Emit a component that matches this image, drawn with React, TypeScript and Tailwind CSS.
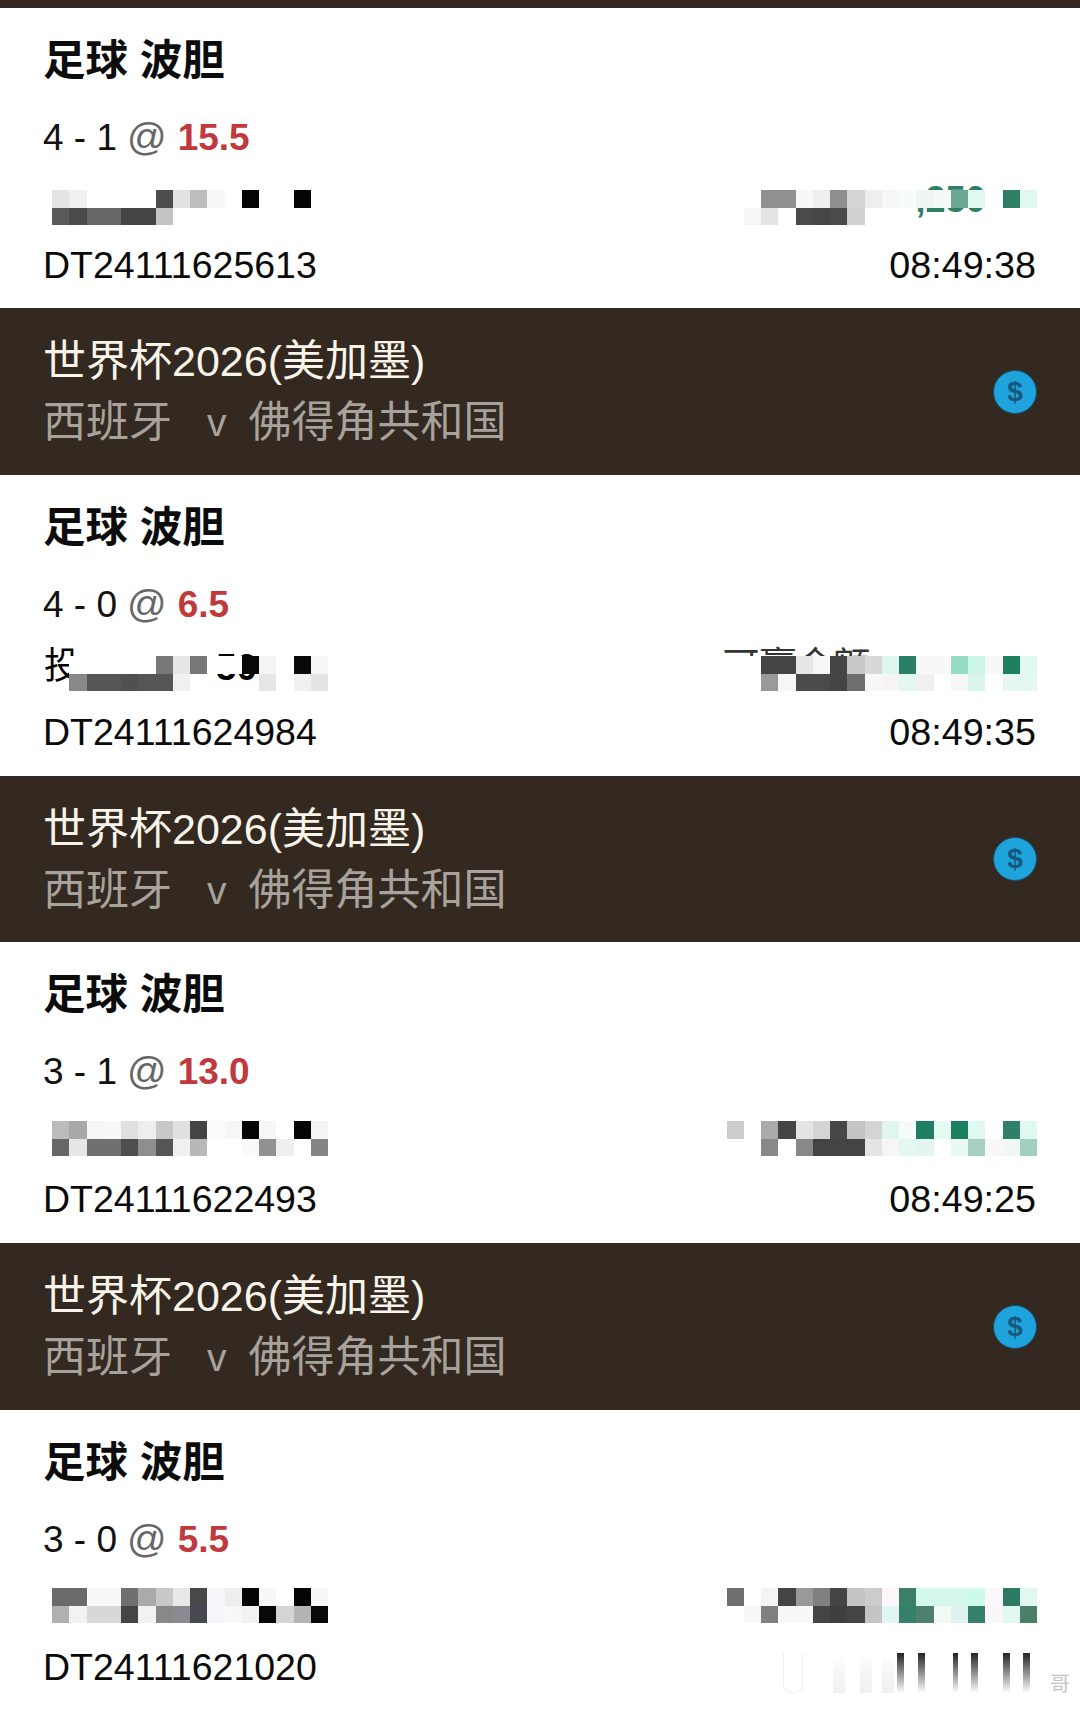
const SANS = "font-['Liberation_Sans','Noto_Sans_CJK_SC',sans-serif]";

// "" = white cell, "t" = see-through cell (text under the mosaic shows)
type MosaicData = { a: string[]; b: string[] };

interface BetData {
  score: string;
  odds: string;
  id: string;
  time?: string;
  height: string;
  mosaicTop: string;
  left: MosaicData;
  right: MosaicData;
  leftUnder?: React.ReactNode;
  rightUnder?: React.ReactNode;
}

const bets: BetData[] = [
  {
    score: '4 - 1',
    odds: '15.5',
    id: 'DT24111625613',
    time: '08:49:38',
    height: 'h-[300px]',
    mosaicTop: 'pt-[4px]',
    left: {
      a: ['#e4e4e4', '#f0f0f0', '', '', '', '', '#4d4d4d', '#e2e2e2', '#bdbdbd', '#f8f8f8', '', '#050505', '', '', '#050505', '', ''],
      b: ['#5a5a5a', '#4a4a4a', '#666666', '#666666', '#444444', '#444444', '#c4c4c4', '', '', '', '', '', '', '', '', '', ''],
    },
    right: {
      a: ['', '', '#909090', '#909090', '#f8f8f8', '#eeeeee', '#8e8e8e', '#d4d4d4', '#eeeeee', '#f6f6f6', '#f7fbf9', '#eef6f2', '#f4f9f7', '#6aa893', '#e0f8f0', '', '#2f7f66', '#e0f8f0'],
      b: ['', '#f6f6f6', '#e4e4e4', '', '#4a4a4a', '#464646', '#4a4a4a', '#d0d0d0', '', '', 't', 't', 't', 't', 't', 't', 't', 't'],
    },
    rightUnder: (
      <span className="absolute left-[189px] top-[-12px] text-[36px] leading-[44px] font-bold whitespace-nowrap text-[#2f7f66]">
        ,250
      </span>
    ),
  },
  {
    score: '4 - 0',
    odds: '6.5',
    id: 'DT24111624984',
    time: '08:49:35',
    height: 'h-[301px]',
    mosaicTop: 'pt-[3px]',
    left: {
      a: ['t', '', '', '', '', '', '#777777', '#e6e6e6', '#777777', '', '', '#080808', '#f4f4f4', '', '#0a0a0a', '#f8f8f8', ''],
      b: ['t', '#888888', '#555555', '#555555', '#505050', '#555555', '#555555', '#f0f0f0', '', 't', 't', 't', '#e6e6e6', '', '#f0f0f0', '#e4e4e4', ''],
    },
    right: {
      a: ['', '', '#444444', '#444444', '#e6e6e6', '#f6f6f6', '#444444', '#c8c8c8', '#d8d8d8', '#dff7ef', '#2a7f66', '#f8f8f8', '#f8f8f8', '#97dcc5', '#cdf5e9', '#f8f8f8', '#1f8060', '#dff8f0'],
      b: ['', '', '#999999', '#f6f6f6', '#4a4a4a', '#4a4a4a', '#444444', '#6f6f6f', '#f8f8f8', '#f8f4f4', '#e4f6f0', '#f0f0f0', '', '#f6f6f6', '#d8f6ec', '', '#e4f8f0', '#e4f8f0'],
    },
    leftUnder: (
      <>
        <span className="absolute left-[-8px] top-[-11px] text-[37px] leading-[44px] text-black">投</span>
        <span className="absolute left-[164px] top-[-10px] text-[37px] leading-[44px] font-bold text-black">50.</span>
      </>
    ),
    rightUnder: (
      <span className="absolute left-[-4px] top-[-11px] text-[37px] leading-[44px] whitespace-nowrap text-[#333333]">
        可赢金额
      </span>
    ),
  },
  {
    score: '3 - 1',
    odds: '13.0',
    id: 'DT24111622493',
    time: '08:49:25',
    height: 'h-[301px]',
    mosaicTop: 'pt-[1px]',
    left: {
      a: ['#bbbbbb', '#a8a8a8', '#f6f6f6', '#f8f8f8', '#e0e0e0', '#eeeeee', '#c8c8c8', '#e0e0e0', '#444444', '#fbfbfb', '#f6f6f6', '#050505', '#f6f6f6', '', '#050505', '#f4f4f4', ''],
      b: ['#666666', '#e6e6e6', '#707070', '#707070', '#4f4f4f', '#8e8e8e', '#555555', '#f0f0f0', '#b8b8b8', '', '', '#fafafa', '#919191', '#eeeeee', '', '#848484', ''],
    },
    right: {
      a: ['#cccccc', '', '#aaaaaa', '#444444', '#e4e4e4', '#d4d4d4', '#474747', '#c4c4c4', '#d4d4d4', '#dff5ee', '#f4fbf8', '#1f7f64', '#e4fbf4', '#1b8060', '#dff8f0', '', '#2f8068', '#dff8f0'],
      b: ['', '', '#888888', '', '#888888', '#444444', '#444444', '#444444', '#e4e4e4', '#f6f6f6', '#e4f8f2', '#e4f4ef', '', '#e8f8f3', '#a8d0c2', '#f8f8f8', '#f0f8f5', '#a0cfbd'],
    },
  },
  {
    score: '3 - 0',
    odds: '5.5',
    id: 'DT24111621020',
    height: 'h-[300px]',
    mosaicTop: 'pt-[0px]',
    left: {
      a: ['#6a6a6a', '#6a6a6a', '#f8f8f8', '#f8f8f8', '#707070', '#aaaaaa', '#c8c8c8', '#e8e8e8', '#484848', '#f6f6fa', '#eeeeee', '#050505', '#f8f8f8', '', '#050505', '#f8f8f8', ''],
      b: ['#b0b0b0', '#f2f2f2', '#d8d8d8', '#d8d8d8', '#444444', '#f2f2f2', '#888888', '#8a8a90', '#484850', '#f6f6fa', '#f8f8f8', '#f2f2f2', '#080808', '#d4d4d4', '#b4b4b4', '#080808', ''],
    },
    right: {
      a: ['#6f6f6f', '', '#f4f4f4', '#444444', '#999999', '#808080', '#444444', '#c4c4c4', '#cccccc', '#fdf6fa', '#3a7f68', '#d4f8ec', '#d4f8ec', '#d4f8ec', '#ccfbe8', '#fdf6fa', '#2f7a64', '#e0f8f0'],
      b: ['', '#f8f8f8', '#808080', '#f8f8f8', '#f8f8f8', '#444444', '#3f3f3f', '#444444', '#c4c4c4', '#e0f6f2', '#35806a', '#4f7f6f', '#f2faf5', '#dff2ef', '#35806a', '#f8f8f8', '#e0f8f0', '#4a8068'],
    },
  },
];

function Mosaic({ data, cols, under }: { data: MosaicData; cols: string; under?: React.ReactNode }) {
  return (
    <div className="relative overflow-visible">
      {under}
      <div className={`relative grid grid-rows-[17.5px_17.5px] ${cols}`}>
        {[...data.a, ...data.b].map((c, i) => (
          <div key={i} style={{ backgroundColor: c === 't' ? 'transparent' : c === '' ? '#ffffff' : c }} />
        ))}
      </div>
    </div>
  );
}

function MatchBar({ height }: { height: string }) {
  return (
    <div className={`flex items-center justify-between bg-[#332920] pl-[43px] pr-[43px] ${height}`}>
      <div className="pt-[1px]">
        <div className="text-[43px] leading-[61px] text-[#f8f4ea] whitespace-nowrap">世界杯2026(美加墨)</div>
        <div className="flex items-center text-[43px] leading-[61px] text-[#a8a29c] whitespace-nowrap">
          <span>西班牙</span>
          <span className="ml-[35px] mr-[22px] text-[39px]">v</span>
          <span>佛得角共和国</span>
        </div>
      </div>
      <div className="flex h-[44px] w-[44px] items-center justify-center rounded-full border border-[#174f6c] bg-[#1fa3dc] text-[28px] font-bold text-[#17587c]">
        $
      </div>
    </div>
  );
}

function BetCard({ bet }: { bet: BetData }) {
  return (
    <div className={`bg-white ${bet.height}`}>
      <div className="pl-[43px] pt-[28px] text-[42.5px] leading-[50px] font-bold text-[#0c0c0c]">足球 波胆</div>
      <div className="mt-[29px] flex items-baseline pl-[43px] text-[37px] leading-[44px]">
        <span className="text-[#111111]">{bet.score}</span>
        <span className="ml-[10px] text-[39px] text-[#666666]">@</span>
        <span className="ml-[11px] font-bold text-[#c0393d]">{bet.odds}</span>
      </div>
      <div className={`mt-[26px] flex h-[47px] justify-between pl-[52px] pr-[43px] ${bet.mosaicTop}`}>
        <Mosaic data={bet.left} cols="grid-cols-[repeat(17,17.25px)]" under={bet.leftUnder} />
        <Mosaic data={bet.right} cols="grid-cols-[repeat(18,17.25px)]" under={bet.rightUnder} />
      </div>
      <div className="mt-[10px] flex items-baseline justify-between pl-[43px] pr-[44px] leading-[44px] text-[#0a0a0a]">
        <span className="text-[37.5px]">{bet.id}</span>
        {bet.time ? <span className="text-[37.7px]">{bet.time}</span> : null}
      </div>
    </div>
  );
}

export default function App() {
  return (
    <div className={`relative h-[1710px] w-[1080px] overflow-hidden bg-white ${SANS}`}>
      <div className="h-[8px] bg-[#332920]" />
      <BetCard bet={bets[0]} />
      <MatchBar height="h-[167px]" />
      <BetCard bet={bets[1]} />
      <MatchBar height="h-[166px]" />
      <BetCard bet={bets[2]} />
      <MatchBar height="h-[167px]" />
      <BetCard bet={bets[3]} />

      {/* faded watermark strip in the bottom corner */}
      <div className="absolute bottom-[17px] left-[782px] flex h-[40px] items-stretch">
        <div className="ml-[1px] w-[20px] rounded-b-[8px] border-x border-b border-[#f0f0f0]" />
        <div className="ml-[30px] w-[12px] bg-gradient-to-b from-transparent via-[#f6f6f6] to-[#f0f0f0]" />
        <div className="ml-[15px] w-[12px] bg-gradient-to-b from-transparent via-[#f6f6f6] to-[#f0f0f0]" />
        <div className="ml-[10px] w-[12px] bg-gradient-to-b from-transparent via-[#f6f6f6] to-[#f0f0f0]" />
        <div className="ml-[3px] w-[7px] bg-gradient-to-b from-[#222222] to-transparent" />
        <div className="ml-[14px] w-[7px] bg-gradient-to-b from-[#222222] to-transparent" />
        <div className="ml-[28px] w-[5px] bg-gradient-to-b from-[#222222] to-transparent" />
        <div className="ml-[13px] w-[7px] bg-gradient-to-b from-[#222222] to-transparent" />
        <div className="ml-[25px] w-[7px] bg-gradient-to-b from-[#222222] to-transparent" />
        <div className="ml-[13px] w-[7px] bg-gradient-to-b from-[#222222] to-transparent" />
      </div>
      <span className="absolute bottom-[13px] left-[1050px] text-[20px] leading-[26px] text-[#c4c4c4]">哥</span>
    </div>
  );
}
